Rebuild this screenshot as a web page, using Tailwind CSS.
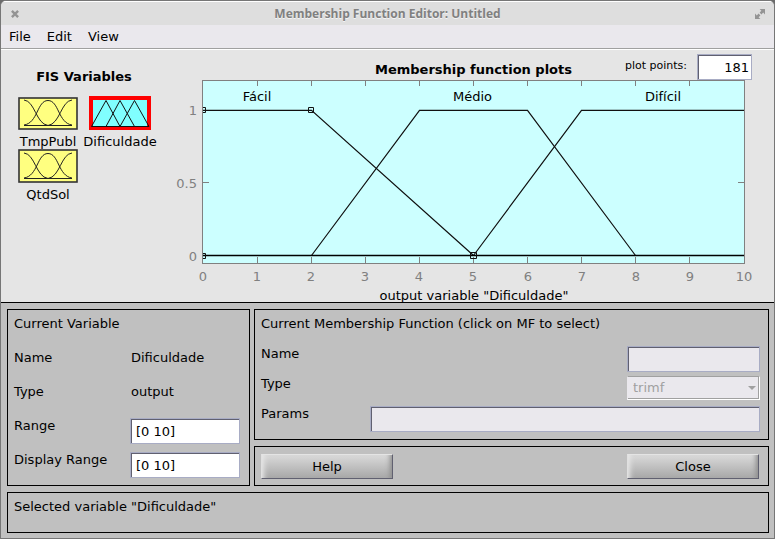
<!DOCTYPE html>
<html lang="en">
<head>
<meta charset="utf-8">
<meta name="viewport" content="width=device-width, initial-scale=1">
<title>Membership Function Editor: Untitled</title>
<script src="https://cdn.jsdelivr.net/npm/@tailwindcss/browser@4"></script>
</head>
<body class="bg-[#6b6b6b] font-['DejaVu_Sans',sans-serif] text-[13px] leading-4 text-black">
<div class="flex min-h-screen flex-col overflow-hidden rounded-t-md border border-[#767676] bg-[#c0c0c0]">

  <header class="flex h-6 items-center border-t border-white bg-[#dedede] px-2 text-[#808080]">
    <button type="button" aria-label="Close window" class="flex w-3 justify-center">
      <svg class="h-2 w-2" viewBox="0 0 8 8" fill="none" stroke="#949494" stroke-width="2.4"><path d="M0.9 0.9L7.1 7.1M7.1 0.9L0.9 7.1"/></svg>
    </button>
    <h1 class="flex-1 pt-px text-center font-['Open_Sans',sans-serif] text-[12px] font-bold leading-5 [text-shadow:0_1px_0_#f4f4f4]">Membership Function Editor: Untitled</h1>
    <button type="button" aria-label="Maximize window" class="flex w-3 justify-center">
      <svg class="h-[10px] w-[10px]" viewBox="0 0 10 10" fill="#949494"><path d="M4.6 0H10V5.4L8.2 3.6L6.4 5.4L4.6 3.6L6.4 1.8ZM0 4.6L1.8 6.4L3.6 4.6L5.4 6.4L3.6 8.2L5.4 10H0Z"/></svg>
    </button>
  </header>

  <nav class="flex h-6 items-center gap-4 border-b border-[#a0a0a0] bg-[#eae8ed] px-2">
    <button type="button">File</button>
    <button type="button">Edit</button>
    <button type="button">View</button>
  </nav>

  <main class="flex border-b border-t border-b-black border-t-white bg-[#e5e5e5]">
    <section class="w-[172px] shrink-0 pl-[11px] pt-[19px]">
      <h2 class="w-36 text-center font-bold">FIS Variables</h2>
      <div class="mt-[11px] grid w-36 grid-cols-2">
        <button type="button" class="flex h-[53px] flex-col items-center gap-[3px]">
          <svg class="h-[34px] w-[60px] shrink-0" viewBox="0 0 60 34" fill="none" stroke="#222">
            <rect x="1" y="2" width="58" height="31" fill="#ffff80" stroke="#333" stroke-width="1.600"/>
            <path d="M6 4C17 5 18 28 30 29.500H54M6 29C20 27 19 4.500 30 4.500S40 27 54 29M54 4C43 5 42 28 30 29.500H6"/>
          </svg>
          <span class="leading-[18px]">TmpPubl</span>
        </button>
        <button type="button" class="flex h-[53px] flex-col items-center gap-[3px]">
          <svg class="h-[34px] w-[62px] shrink-0" viewBox="0 0 62 34" fill="none" stroke="#111">
            <rect x="2" y="2" width="58" height="31" fill="#80ffff" stroke="#f00" stroke-width="4"/>
            <path d="M2.500 30.500L17 4.500L31 30.500H17L31 4.500L45.500 30.500H31L45.500 4.500L60 30.500H2.500"/>
          </svg>
          <span class="leading-[18px]">Dificuldade</span>
        </button>
        <button type="button" class="flex h-[53px] flex-col items-center gap-[3px]">
          <svg class="h-[34px] w-[60px] shrink-0" viewBox="0 0 60 34" fill="none" stroke="#222">
            <rect x="1" y="1" width="58" height="32" fill="#ffff80" stroke="#333" stroke-width="1.600"/>
            <path d="M6 4C17 5 18 28 30 29.500H54M6 29C20 27 19 4.500 30 4.500S40 27 54 29M54 4C43 5 42 28 30 29.500H6"/>
          </svg>
          <span class="leading-[18px]">QtdSol</span>
        </button>
      </div>
    </section>

    <section class="min-w-0 flex-1">
      <div class="grid h-[30px] grid-cols-[1fr_auto_1fr] pt-1">
        <h2 class="col-start-2 pt-2 font-bold">Membership function plots</h2>
        <div class="flex items-start justify-end gap-[10px] pr-[22px]">
          <label for="points" class="pt-1 text-[11px]">plot points:</label>
          <input id="points" value="181" class="h-[26px] w-[55px] border border-[#a8acc4] bg-white pl-[2px] pr-[2px] text-right shadow-[inset_1px_1px_0_#606070]">
        </div>
      </div>
      <svg class="block w-full" viewBox="173 80 601 222" font-size="13" role="img" aria-label="Membership function plots">
        <rect x="202.500" y="80.500" width="542" height="183" fill="#ccffff" stroke="#808080"/>
        <path stroke="#808080" fill="none" d="M257.500 81v5M311.500 81v5M365.500 81v5M419.500 81v5M473.500 81v5M527.500 81v5M581.500 81v5M635.500 81v5M689.500 81v5M257.500 263v-6M311.500 263v-6M365.500 263v-6M419.500 263v-6M473.500 263v-6M527.500 263v-6M581.500 263v-6M635.500 263v-6M689.500 263v-6M203 182.500h6M744 182.500h-6M203 110.500h6M744 110.500h-6"/>
        <g fill="none" stroke="#111" stroke-width="1.200">
          <path d="M203 110.300H311.500L473.500 255.500"/>
          <path d="M311.500 255.500L419.500 110.300H527.500L635.500 255.500"/>
          <path d="M473.500 255.500L581.500 110.300H744"/>
          <path d="M203 255.600H744" stroke="#000" stroke-width="1.500"/>
          <path stroke-width="1" d="M203 107.500h2.500v5h-2.500M203 253.500h2.500v5h-2.500M308.500 107.500h5v5h-5zM470.500 252.500h6v6h-6z"/>
        </g>
        <g text-anchor="middle">
          <text x="257" y="101">Fácil</text>
          <text x="472.500" y="101">Médio</text>
          <text x="663" y="101">Difícil</text>
          <text x="474" y="300">output variable "Dificuldade"</text>
        </g>
        <g fill="#808080" text-anchor="middle">
          <text x="203" y="281">0</text><text x="257" y="281">1</text><text x="311" y="281">2</text><text x="365" y="281">3</text><text x="419" y="281">4</text><text x="473" y="281">5</text><text x="528" y="281">6</text><text x="582" y="281">7</text><text x="636" y="281">8</text><text x="690" y="281">9</text><text x="744" y="281">10</text>
        </g>
        <g fill="#808080" text-anchor="end">
          <text x="197" y="115">1</text><text x="197" y="188">0.5</text><text x="197" y="261">0</text>
        </g>
      </svg>
    </section>
  </main>

  <div class="flex flex-1 flex-col gap-[6px] pb-[5px] pl-[6px] pr-[5px] pt-[6px]">
    <div class="grid grid-cols-[243px_1fr] gap-1">
      <section class="grid auto-rows-[26px] grid-cols-[116px_1fr] gap-y-2 border border-black pb-[7px] pl-[6px] pr-[9px] pt-[6px]">
        <h2 class="col-span-2">Current Variable</h2>
        <span>Name</span><span class="pl-px">Dificuldade</span>
        <span>Type</span><span class="pl-px">output</span>
        <label for="range">Range</label>
        <input id="range" value="[0 10]" class="h-[26px] w-full min-w-0 border border-[#a8acc4] bg-white px-[5px] shadow-[inset_1px_1px_0_#606070]">
        <label for="display">Display Range</label>
        <input id="display" value="[0 10]" class="h-[26px] w-full min-w-0 border border-[#a8acc4] bg-white px-[5px] shadow-[inset_1px_1px_0_#606070]">
      </section>

      <div class="flex flex-col gap-[6px]">
        <section class="grid auto-rows-[26px] grid-cols-[109px_1fr] gap-y-1 border border-black pb-[7px] pl-[6px] pr-2 pt-[6px]">
          <h2 class="col-span-2">Current Membership Function (click on MF to select)</h2>
          <label for="mfname">Name</label>
          <input id="mfname" disabled class="h-[26px] w-[133px] justify-self-end border border-[#a8acc4] bg-[#eae8ed] shadow-[inset_1px_1px_0_#606070]">
          <label for="mftype">Type</label>
          <div class="relative h-6 w-[133px] justify-self-end">
            <select id="mftype" disabled class="h-6 w-full appearance-none border border-b-white border-l-[#eae8ed] border-r-white border-t-[#a0a0a0] bg-[#eae8ed] pl-[5px] text-[#a0a0a0] opacity-100 shadow-[inset_-1px_-1px_0_#a0a0a0]"><option>trimf</option></select>
            <svg class="pointer-events-none absolute right-[4px] top-[10px] h-1 w-2" viewBox="0 0 8 4" fill="#a0a0a0"><path d="M0 0H8L4 4Z"/></svg>
          </div>
          <label for="params">Params</label>
          <input id="params" disabled class="h-[26px] w-full min-w-0 border border-[#a8acc4] bg-[#eae8ed] shadow-[inset_1px_1px_0_#606070]">
        </section>
        <section class="flex justify-between border border-black pb-[6px] pl-[6px] pr-[9px] pt-[7px]">
          <button type="button" class="h-[25px] w-[132px] border border-b-[#606070] border-l-[#e0e0e0] border-r-[#606070] border-t-[#e4e4e4] bg-linear-to-b from-[#dadada] to-[#a8a8a8] shadow-[inset_6px_0_5px_-4px_#e8e8e8,inset_-6px_0_5px_-4px_#8c8c8c]">Help</button>
          <button type="button" class="h-[25px] w-[132px] border border-b-[#606070] border-l-[#e0e0e0] border-r-[#606070] border-t-[#e4e4e4] bg-linear-to-b from-[#dadada] to-[#a8a8a8] shadow-[inset_6px_0_5px_-4px_#e8e8e8,inset_-6px_0_5px_-4px_#8c8c8c]">Close</button>
        </section>
      </div>
    </div>
    <footer class="flex-1 border border-black p-[6px]">Selected variable "Dificuldade"</footer>
  </div>
</div>
</body>
</html>
